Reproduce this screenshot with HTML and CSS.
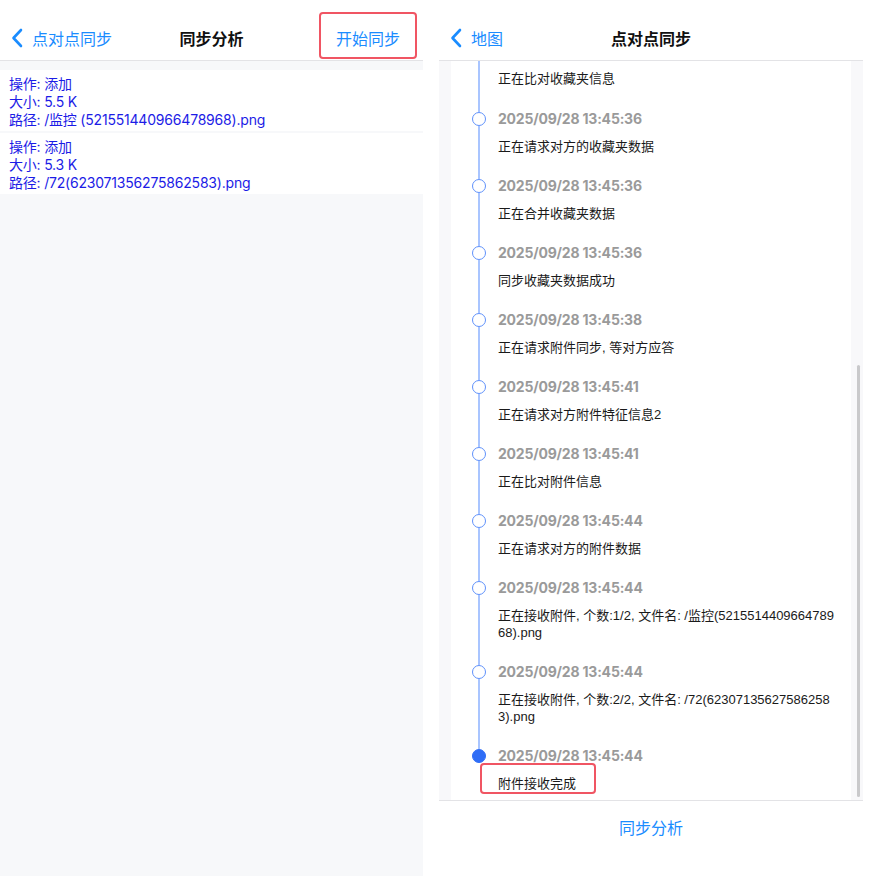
FILE: index.html
```html
<!DOCTYPE html>
<html lang="zh-CN">
<head>
<meta charset="utf-8">
<title>同步分析</title>
<link rel="stylesheet" href="styles.css">
</head>
<body>
<div class="page">
  <section class="panel left">
    <header class="nav">
      <div class="nav-left">
        <svg class="chev" viewBox="0 0 12 20" width="12" height="20"><path d="M10 2 L2.5 10 L10 18" fill="none" stroke="#1a8cff" stroke-width="2.6" stroke-linecap="round" stroke-linejoin="round"/></svg>
        <span>点对点同步</span>
      </div>
      <div class="nav-title">同步分析</div>
      <div class="nav-right"><span class="action">开始同步</span></div>
    </header>
    <div class="list">
      <div class="row">
        <div>操作: 添加</div>
        <div>大小: 5.5 K</div>
        <div>路径: /监控 (521551440966478968).png</div>
      </div>
      <div class="row">
        <div>操作: 添加</div>
        <div>大小: 5.3 K</div>
        <div>路径: /72(623071356275862583).png</div>
      </div>
    </div>
  </section>

  <section class="panel right">
    <header class="nav">
      <div class="nav-left">
        <svg class="chev" viewBox="0 0 12 20" width="12" height="20"><path d="M10 2 L2.5 10 L10 18" fill="none" stroke="#1a8cff" stroke-width="2.6" stroke-linecap="round" stroke-linejoin="round"/></svg>
        <span>地图</span>
      </div>
      <div class="nav-title">点对点同步</div>
      <div class="nav-right"></div>
    </header>
    <div class="scroll">
      <div class="card">
        <div class="item first">
          <div class="rail"><span class="seg grow"></span></div>
          <div class="body"><div class="desc">正在比对收藏夹信息</div></div>
        </div>
        <div class="item">
          <div class="rail"><span class="seg top"></span><span class="dot"></span><span class="seg grow"></span></div>
          <div class="body"><div class="ts">2025/09/28 13:45:36</div><div class="desc">正在请求对方的收藏夹数据</div></div>
        </div>
        <div class="item">
          <div class="rail"><span class="seg top"></span><span class="dot"></span><span class="seg grow"></span></div>
          <div class="body"><div class="ts">2025/09/28 13:45:36</div><div class="desc">正在合并收藏夹数据</div></div>
        </div>
        <div class="item">
          <div class="rail"><span class="seg top"></span><span class="dot"></span><span class="seg grow"></span></div>
          <div class="body"><div class="ts">2025/09/28 13:45:36</div><div class="desc">同步收藏夹数据成功</div></div>
        </div>
        <div class="item">
          <div class="rail"><span class="seg top"></span><span class="dot"></span><span class="seg grow"></span></div>
          <div class="body"><div class="ts">2025/09/28 13:45:38</div><div class="desc">正在请求附件同步, 等对方应答</div></div>
        </div>
        <div class="item">
          <div class="rail"><span class="seg top"></span><span class="dot"></span><span class="seg grow"></span></div>
          <div class="body"><div class="ts">2025/09/28 13:45:41</div><div class="desc">正在请求对方附件特征信息2</div></div>
        </div>
        <div class="item">
          <div class="rail"><span class="seg top"></span><span class="dot"></span><span class="seg grow"></span></div>
          <div class="body"><div class="ts">2025/09/28 13:45:41</div><div class="desc">正在比对附件信息</div></div>
        </div>
        <div class="item">
          <div class="rail"><span class="seg top"></span><span class="dot"></span><span class="seg grow"></span></div>
          <div class="body"><div class="ts">2025/09/28 13:45:44</div><div class="desc">正在请求对方的附件数据</div></div>
        </div>
        <div class="item">
          <div class="rail"><span class="seg top"></span><span class="dot"></span><span class="seg grow"></span></div>
          <div class="body"><div class="ts">2025/09/28 13:45:44</div><div class="desc">正在接收附件, 个数:1/2, 文件名: /监控(521551440966478968).png</div></div>
        </div>
        <div class="item">
          <div class="rail"><span class="seg top"></span><span class="dot"></span><span class="seg grow"></span></div>
          <div class="body"><div class="ts">2025/09/28 13:45:44</div><div class="desc">正在接收附件, 个数:2/2, 文件名: /72(623071356275862583).png</div></div>
        </div>
        <div class="item last">
          <div class="rail"><span class="seg top"></span><span class="dot filled"></span><span class="seg grow none"></span></div>
          <div class="body"><div class="ts">2025/09/28 13:45:44</div><div class="desc"><span class="marked">附件接收完成</span></div></div>
        </div>
      </div>
      <div class="thumb"></div>
    </div>
    <footer class="bottom">
      <span class="bottom-link">同步分析</span>
    </footer>
  </section>
</div>
</body>
</html>
```

FILE: styles.css
```css
html, body {
  margin: 0;
  padding: 0;
  background: #ffffff;
}

body {
  font-family: "Inter", "Noto Sans CJK SC", sans-serif;
  color: #111;
}

.page {
  display: flex;
  width: 869px;
  height: 876px;
  overflow: hidden;
}

.panel {
  display: flex;
  flex-direction: column;
  height: 876px;
}

.panel.left {
  width: 423px;
  margin-right: 16px;
  background: #f7f8fa;
}

.panel.right {
  width: 424px;
  background: #ffffff;
}

/* navigation bar */
.nav {
  display: grid;
  grid-template-columns: 1fr auto 1fr;
  grid-template-rows: 44px;
  align-items: center;
  box-sizing: border-box;
  height: 61px;
  padding-top: 16px;
  background: #ffffff;
  border-bottom: 1px solid #e3e3e6;
  font-family: "Noto Sans CJK SC", sans-serif;
  font-size: 16px;
  flex-shrink: 0;
}

.nav-left {
  display: flex;
  align-items: center;
  gap: 9px;
  padding-left: 11px;
  color: #1a8cff;
  line-height: 22px;
}

.chev {
  display: block;
  width: 12px;
  height: 20px;
}

.nav-title {
  font-weight: 700;
  color: #111;
  line-height: 22px;
}

.nav-right {
  justify-self: end;
  display: flex;
}

.action {
  display: flex;
  align-items: center;
  justify-content: center;
  box-sizing: border-box;
  width: 98px;
  height: 47px;
  margin-right: 6px;
  margin-bottom: 5px;
  padding-top: 5px;
  border: 2px solid #f05563;
  border-radius: 4px;
  color: #1a8cff;
  line-height: 22px;
}

/* left list */
.list {
  padding-top: 9px;
}

.row {
  background: #ffffff;
  margin-bottom: 2px;
  padding: 5px 9px 2px;
  font-family: "Inter", "Noto Sans CJK SC", sans-serif;
  font-size: 14px;
  letter-spacing: -0.2px;
  line-height: 18px;
  color: #1c1ce6;
}

/* right timeline */
.scroll {
  position: relative;
  flex: 1;
  overflow: hidden;
  background: #f8f8fa;
  padding: 0 12px;
}

.card {
  background: #ffffff;
  min-height: 100%;
}

.item {
  display: grid;
  grid-template-columns: 47px 1fr;
}

.rail {
  display: flex;
  flex-direction: column;
  align-items: center;
  width: 14px;
  margin-left: 21px;
}

.seg {
  width: 1.5px;
  background: #a9c5ff;
}

.seg.top {
  height: 3px;
}

.seg.grow {
  flex: 1;
}

.seg.none {
  background: transparent;
}

.dot {
  box-sizing: border-box;
  width: 14px;
  height: 14px;
  border: 1.5px solid #5f91fb;
  border-radius: 50%;
  background: #ffffff;
  flex-shrink: 0;
}

.dot.filled {
  background: #2f6df6;
  border-color: #2f6df6;
}

.body {
  padding: 0 0 21px 0;
  min-width: 0;
}

.item.first .body {
  padding-top: 9px;
  padding-bottom: 22px;
}

.ts {
  font-family: "Inter", "Noto Sans CJK SC", sans-serif;
  font-size: 14px;
  font-weight: 700;
  letter-spacing: -0.2px;
  line-height: 20px;
  color: #9a9a9a;
}

.desc {
  max-width: 337.5px;
  margin-top: 9px;
  font-family: "Liberation Sans", "Noto Sans CJK SC", sans-serif;
  font-size: 13px;
  line-height: 17px;
  color: #1a1a1a;
  word-break: break-all;
}

.item.first .desc {
  margin-top: 0;
}

.marked {
  position: relative;
  display: inline-block;
}

.marked::after {
  content: "";
  position: absolute;
  left: -18px;
  right: -20px;
  top: -12px;
  bottom: -2px;
  border: 2px solid #f05563;
  border-radius: 4px;
}

.thumb {
  position: absolute;
  right: 3px;
  top: 304px;
  bottom: 3px;
  width: 3px;
  border-radius: 2px;
  background: #c9c9cb;
}

/* bottom bar */
.bottom {
  flex-shrink: 0;
  box-sizing: border-box;
  height: 76px;
  border-top: 1px solid #e3e3e6;
  display: flex;
  justify-content: center;
  padding-top: 15px;
}

.bottom-link {
  font-family: "Noto Sans CJK SC", sans-serif;
  font-size: 16px;
  line-height: 22px;
  color: #1a8cff;
}
```
